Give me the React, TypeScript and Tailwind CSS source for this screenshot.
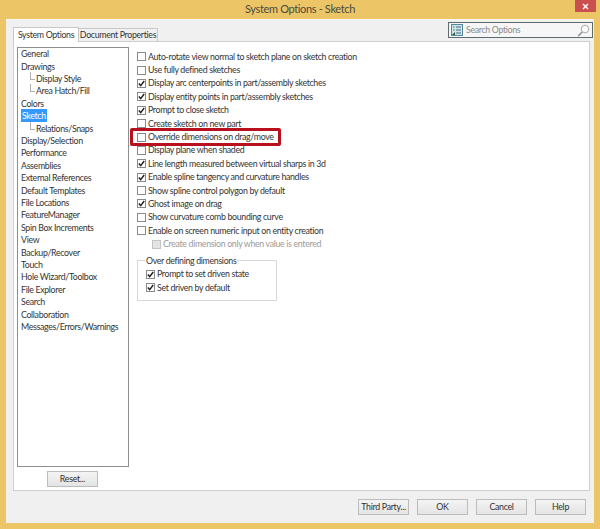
import React from 'react';

const font = { fontFamily: 'Lato, Roboto, sans-serif' };

const tree = [
  { label: 'General' },
  { label: 'Drawings' },
  { label: 'Display Style', child: true },
  { label: 'Area Hatch/Fill', child: true },
  { label: 'Colors' },
  { label: 'Sketch', selected: true },
  { label: 'Relations/Snaps', child: true },
  { label: 'Display/Selection' },
  { label: 'Performance' },
  { label: 'Assemblies' },
  { label: 'External References' },
  { label: 'Default Templates' },
  { label: 'File Locations' },
  { label: 'FeatureManager' },
  { label: 'Spin Box Increments' },
  { label: 'View' },
  { label: 'Backup/Recover' },
  { label: 'Touch' },
  { label: 'Hole Wizard/Toolbox' },
  { label: 'File Explorer' },
  { label: 'Search' },
  { label: 'Collaboration' },
  { label: 'Messages/Errors/Warnings' },
];

const options = [
  { label: 'Auto-rotate view normal to sketch plane on sketch creation' },
  { label: 'Use fully defined sketches' },
  { label: 'Display arc centerpoints in part/assembly sketches', checked: true },
  { label: 'Display entity points in part/assembly sketches', checked: true },
  { label: 'Prompt to close sketch', checked: true },
  { label: 'Create sketch on new part' },
  { label: 'Override dimensions on drag/move', highlight: true },
  { label: 'Display plane when shaded' },
  { label: 'Line length measured between virtual sharps in 3d', checked: true },
  { label: 'Enable spline tangency and curvature handles', checked: true },
  { label: 'Show spline control polygon by default' },
  { label: 'Ghost image on drag', checked: true },
  { label: 'Show curvature comb bounding curve' },
  { label: 'Enable on screen numeric input on entity creation' },
];

const CheckRow = ({ label, checked, highlight }: any) => (
  <div className="relative flex h-[13.4px] items-center gap-[2px] whitespace-nowrap">
    <span className="flex h-[9px] w-[9px] shrink-0 items-center justify-center border border-[#8a8a8a] bg-white">
      {checked && (
        <svg width="7" height="7" viewBox="0 0 7 7">
          <path d="M0.8 3.6 L2.7 5.6 L6.2 1" fill="none" stroke="#222" strokeWidth="1.5" />
        </svg>
      )}
    </span>
    <span className="mb-px">{label}</span>
    {highlight && (
      <div className="absolute left-[-7px] top-[-2px] h-[18px] w-[151px] rounded-[2px] border-[3px] border-[#b8101c]" />
    )}
  </div>
);

const Button = ({ label, className }: any) => (
  <button
    className={`flex h-[16px] w-[51px] items-center justify-center whitespace-nowrap border border-[#bcbcbc] bg-gradient-to-b from-[#f4f4f4] to-[#e4e4e4] text-[8.8px] tracking-[-0.3px] text-[#333] ${className || ''}`}
  >
    {label}
  </button>
);

const App = () => {
  return (
    <div style={font} className="flex h-[529px] w-[600px] flex-col overflow-hidden bg-[#ecc567] text-[8.8px] tracking-[-0.33px] text-[#333]">
      {/* title bar */}
      <div className="relative flex h-[19px] shrink-0 items-center justify-center text-[11px] tracking-[-0.35px] text-[#4a4a40]">
        System Options - Sketch
        <div className="absolute right-[4px] top-0 flex h-[12px] w-[21px] items-center justify-center bg-[#c9504f]">
          <svg width="7" height="7" viewBox="0 0 7 7">
            <path d="M1 1 L6 6 M6 1 L1 6" stroke="#fff" strokeWidth="1.4" />
          </svg>
        </div>
      </div>

      <div className="mx-[6px] mb-[6px] flex flex-1 flex-col border-t border-[#f8f8f8] bg-[#f0f0f0] pl-[7px] pr-[4px]">
        {/* tabs + search */}
        <div className="flex h-[21px] shrink-0 items-end">
          <div className="z-10 -mb-px flex h-[15px] w-[66px] items-center justify-center whitespace-nowrap border border-b-0 border-[#c8c8c8] bg-white">
            System Options
          </div>
          <div className="flex h-[13px] w-[79px] items-center justify-center whitespace-nowrap border border-b-0 border-l-0 border-[#c8c8c8] bg-[#f0f0f0]">
            Document Properties
          </div>
          <div className="mb-[3px] ml-auto mr-[-3px] flex h-[16px] w-[145px] items-center border border-[#5d6b70] bg-[#f6f6f6] px-[2px] text-[#8a8a8a]">
            <svg width="12" height="12" viewBox="0 0 12 12" className="shrink-0">
              <rect x="0.5" y="0.5" width="11" height="11" fill="#cfe3ea" stroke="#4f8aa0" />
              <path d="M2 3 H3.5 M2 6 H3.5" stroke="#2d8a3a" strokeWidth="1.2" />
              <path d="M5 3 H10 M5 6 H10 M5 9 H10" stroke="#4a6a80" />
              <path d="M1 11 L4 8 V11 Z" fill="#1f5a30" />
            </svg>
            <span className="ml-[3px]">Search Options</span>
            <svg width="13" height="13" viewBox="0 0 13 13" className="ml-auto shrink-0">
              <circle cx="8" cy="5" r="3.8" fill="#fbfbfb" stroke="#a8a8a8" />
              <path d="M5.2 8 L1.2 12" stroke="#8a8a8a" strokeWidth="1.5" />
            </svg>
          </div>
        </div>

        {/* options panel */}
        <div className="flex h-[450px] shrink-0 border border-[#cfcfcf] bg-white pl-[3px] pt-[5px]">
          <div className="flex w-[112px] shrink-0 flex-col">
            <div className="h-[420px] border border-[#8f8f8f] pl-[3px]">
              {tree.map((item: any) => (
                <div key={item.label} className="flex h-[12.41px] items-center whitespace-nowrap">
                  {item.child && (
                    <span className="mb-[6px] ml-[9px] mr-[1px] h-[8px] w-[5px] border-b border-l border-[#b0b0b0]" />
                  )}
                  <span className={item.selected ? 'mb-px bg-[#3399ff] px-px text-white' : 'mb-px'}>{item.label}</span>
                </div>
              ))}
            </div>
            <Button label="Reset..." className="ml-[30px] mt-[4px]" />
          </div>

          <div className="ml-[8px] pt-[3px]">
            {options.map((o) => (
              <CheckRow key={o.label} {...o} />
            ))}
            <div className="ml-[15px] flex h-[13.4px] items-center gap-[2px] whitespace-nowrap text-[#9a9a9a]">
              <span className="h-[9px] w-[9px] shrink-0 border border-[#c4c4c4] bg-[#e4e4e4]" />
              <span className="mb-px">Create dimension only when value is entered</span>
            </div>

            <fieldset className="mt-[5px] h-[45px] w-[140px] border border-[#d8d8d8] pl-[8px]">
              <legend className="ml-[-1px] px-[1px] leading-[10px]">Over defining dimensions</legend>
              <div className="mt-[2px]">
                <CheckRow label="Prompt to set driven state" checked />
                <CheckRow label="Set driven by default" checked />
              </div>
            </fieldset>
          </div>
        </div>

        {/* footer buttons */}
        <div className="flex flex-1 items-start justify-end gap-[8px] pr-[4px] pt-[8px]">
          <Button label="Third Party..." />
          <Button label="OK" className="border-[#6fa8cc]" />
          <Button label="Cancel" />
          <Button label="Help" />
        </div>
      </div>
    </div>
  );
};

export default App;
